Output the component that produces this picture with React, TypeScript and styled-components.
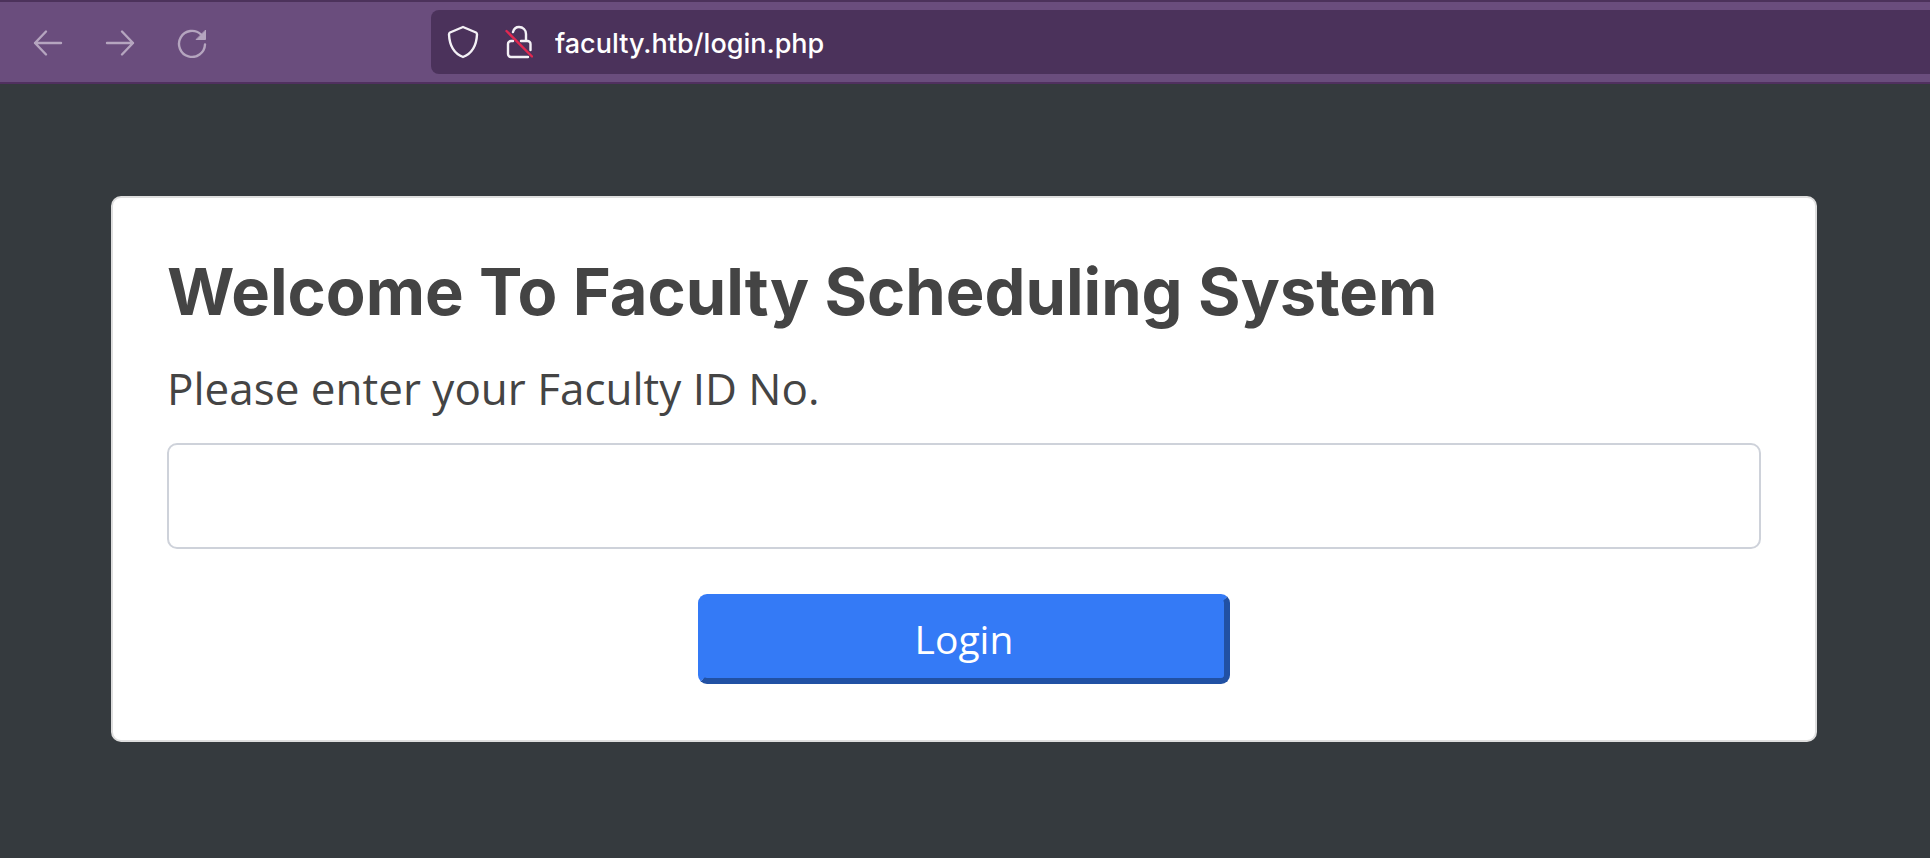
import React from "react";
import styled, { createGlobalStyle } from "styled-components";

const GlobalStyle = createGlobalStyle`
  *, *::before, *::after {
    box-sizing: border-box;
  }

  html {
    background: #353a3e;
  }

  body {
    margin: 0;
    color: #444444;
    font-family: "Open Sans", "Noto Sans", sans-serif;
  }
`;

const Window = styled.div`
  display: flex;
  flex-direction: column;
  min-height: 100vh;
`;

const Toolbar = styled.header`
  display: flex;
  align-items: center;
  height: 84px;
  padding: 8px 0 8px 32px;
  background: #6a4d7d;
  border-top: 2px solid #4c325b;
  border-bottom: 2px solid #50305f;
`;

const NavButtons = styled.nav`
  display: flex;
  flex: none;
  gap: 40px;
  width: 399px;
`;

const NavButton = styled.button`
  width: 32px;
  height: 32px;
  padding: 0;
  border: 0;
  background: none;
  color: #b5a5bf;

  svg {
    display: block;
  }
`;

const AddressBar = styled.div`
  display: flex;
  flex: 1;
  align-items: center;
  gap: 22px;
  min-width: 0;
  height: 64px;
  padding-left: 16px;
  background: #4b325b;
  border-radius: 8px 0 0 8px;

  svg {
    flex: none;
  }
`;

const AddressInput = styled.input`
  flex: 1;
  min-width: 0;
  height: 42px;
  padding: 2px 0 0;
  border: 0;
  outline: 0;
  background: none;
  color: #ffffff;
  font: 500 27px/40px Inter, sans-serif;
`;

const Page = styled.main`
  flex: 1;
  padding: 112px 113px 112px 111px;
`;

const Card = styled.form`
  display: flex;
  flex-direction: column;
  padding: 54px 54px 56px;
  background: #ffffff;
  border: 2px solid #dedede;
  border-radius: 10px;
`;

const Title = styled.h1`
  margin: 0;
  font: 700 65px/80px Inter, sans-serif;
`;

const Label = styled.label`
  margin-top: 24px;
  font-size: 44px;
  line-height: 64px;
`;

const IdInput = styled.input`
  height: 106px;
  margin-top: 23px;
  padding: 0 24px;
  border: 2px solid #ced2da;
  border-radius: 10px;
  outline: 0;
  background: #ffffff;
  color: #444444;
  font: inherit;
  font-size: 40px;
`;

const LoginButton = styled.button`
  align-self: center;
  width: calc(100% / 3);
  height: 90px;
  margin-top: 45px;
  padding: 0;
  border: 6px solid;
  border-color: #347af6 #2151a4 #2151a4 #347af6;
  border-radius: 9px;
  background: #347af6;
  color: #ffffff;
  font: inherit;
  font-size: 39px;
  line-height: 78px;
`;

const stroke = {
  fill: "none",
  stroke: "currentColor",
  strokeWidth: 2.4,
  strokeLinecap: "round" as const,
  strokeLinejoin: "round" as const,
};

const BackIcon = () => (
  <svg width="32" height="32" {...stroke} aria-hidden="true">
    <path d="M29 17H3M14 5.500 3 17l11 11.500" />
  </svg>
);

const ForwardIcon = () => (
  <svg width="32" height="32" {...stroke} aria-hidden="true">
    <path d="M3 17h26M18 5.500 29 17 18 28.500" />
  </svg>
);

const ReloadIcon = () => (
  <svg width="32" height="32" {...stroke} aria-hidden="true">
    <path d="M29 18.500A13 13 0 1 1 25 8.500" />
    <path d="M29.500 4.500v9h-9z" fill="currentColor" strokeWidth="1" />
  </svg>
);

const ShieldIcon = () => (
  <svg width="32" height="36" {...stroke} stroke="#f4f1f6" aria-hidden="true">
    <path d="M16 3 29 8.500Q30 9 30 10.500C29.500 21 25 29.500 16 33 7 29.500 2.500 21 2 10.500Q2 9 3 8.500Z" />
  </svg>
);

const InsecureLockIcon = () => (
  <svg width="32" height="36" {...stroke} stroke="#f4f1f6" aria-hidden="true">
    <path d="M12 8C13 4.500 15 3 18 3c4 0 7 3 7 7v7h1.500a3 3 0 0 1 3 3v6M20 17h5M12 17H10a3 3 0 0 0-3 3v10a3 3 0 0 0 3 3h17" />
    <path d="M5.500 7 31 32.500" stroke="#e22850" />
  </svg>
);

export default function App() {
  return (
    <Window>
      <GlobalStyle />
      <Toolbar>
        <NavButtons aria-label="Browser navigation">
          <NavButton type="button" aria-label="Back"><BackIcon /></NavButton>
          <NavButton type="button" aria-label="Forward"><ForwardIcon /></NavButton>
          <NavButton type="button" aria-label="Reload"><ReloadIcon /></NavButton>
        </NavButtons>
        <AddressBar>
          <ShieldIcon />
          <InsecureLockIcon />
          <AddressInput type="text" aria-label="Address" defaultValue="faculty.htb/login.php" />
        </AddressBar>
      </Toolbar>
      <Page>
        <Card onSubmit={(event) => event.preventDefault()}>
          <Title>Welcome To Faculty Scheduling System</Title>
          <Label htmlFor="faculty-id">Please enter your Faculty ID No.</Label>
          <IdInput id="faculty-id" name="id_no" type="text" />
          <LoginButton type="submit">Login</LoginButton>
        </Card>
      </Page>
    </Window>
  );
}
